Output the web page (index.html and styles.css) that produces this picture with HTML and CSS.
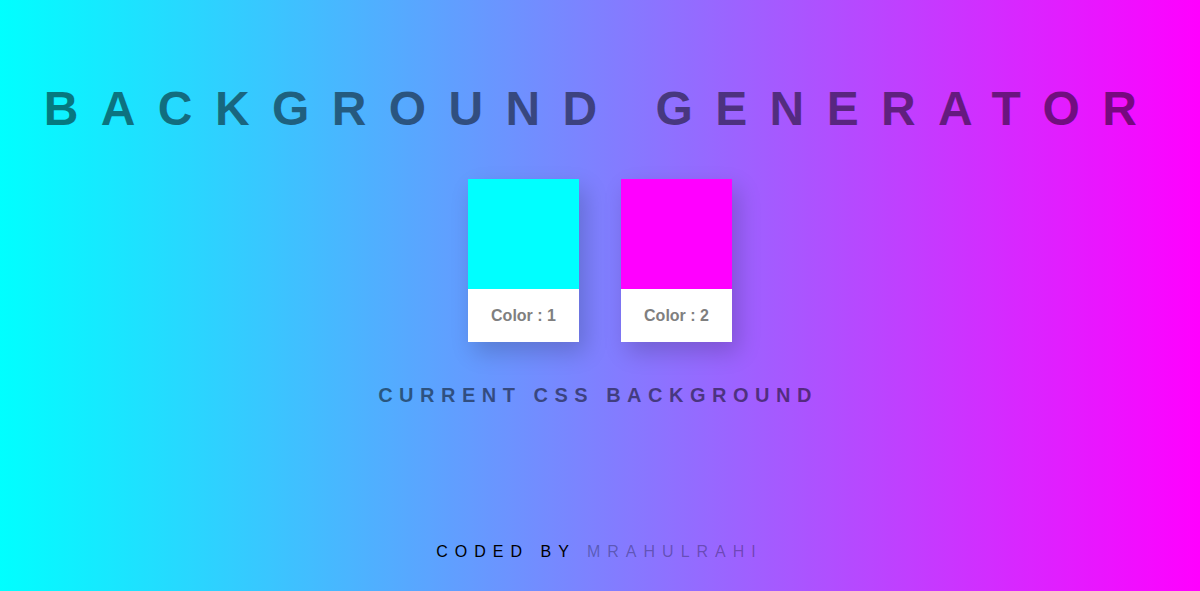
FILE: index.html
```html
<!DOCTYPE html>
<html lang="en">
<head>
<meta charset="utf-8">
<title>Background Generator</title>
<link rel="stylesheet" href="styles.css">
</head>
<body>
  <main class="page">
    <h1 class="title">BACKGROUND GENERATOR</h1>
    <div class="pickers">
      <div class="card">
        <div class="swatch swatch-one"></div>
        <div class="label">Color : 1</div>
      </div>
      <div class="card">
        <div class="swatch swatch-two"></div>
        <div class="label">Color : 2</div>
      </div>
    </div>
    <h3 class="current">CURRENT CSS BACKGROUND</h3>
    <footer class="footer">CODED BY <span class="author">MRAHULRAHI</span></footer>
  </main>
</body>
</html>
```
FILE: styles.css
```css
html, body {
  margin: 0;
  padding: 0;
  height: 100%;
}

body {
  background: linear-gradient(to right, #00ffff, #ff00ff);
  font-family: "Liberation Sans", Arial, sans-serif;
  overflow: hidden;
}

.page {
  min-height: 100vh;
  display: flex;
  flex-direction: column;
  align-items: center;
  box-sizing: border-box;
  padding-bottom: 29px;
}

.title {
  margin: 81px 0 0 3px;
  font-size: 48px;
  line-height: 56px;
  font-weight: bold;
  letter-spacing: 22.4px;
  color: rgba(0, 0, 0, 0.5);
  text-align: center;
}

.pickers {
  display: flex;
  gap: 42px;
  margin-top: 42px;
}

.card {
  width: 111px;
  display: flex;
  flex-direction: column;
  background: #fff;
  box-shadow: 6px 10px 22px rgba(0, 0, 0, 0.18);
}

.swatch {
  height: 110px;
}

.swatch-one {
  background: #00ffff;
}

.swatch-two {
  background: #ff00ff;
}

.label {
  height: 53px;
  display: flex;
  align-items: center;
  justify-content: center;
  font-size: 16px;
  font-weight: bold;
  color: #7f7f7f;
}

.current {
  margin: 41px 0 0 -4px;
  font-size: 20px;
  line-height: 24px;
  font-weight: bold;
  letter-spacing: 6.5px;
  color: rgba(0, 0, 0, 0.5);
}

.footer {
  margin-top: auto;
  margin-left: -1px;
  font-size: 16px;
  line-height: 20px;
  letter-spacing: 7px;
  color: #000;
}

.author {
  color: rgba(0, 0, 0, 0.3);
}
```
